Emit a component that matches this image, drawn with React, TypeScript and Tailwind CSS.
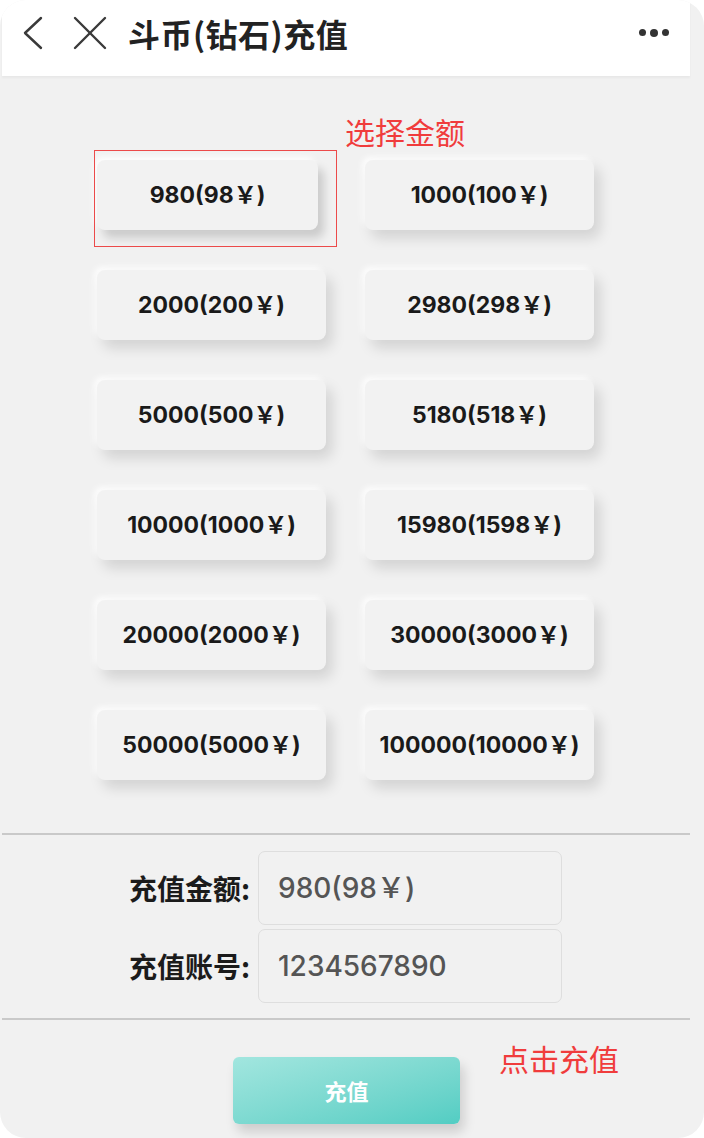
const amounts = [
  "980(98￥)",
  "1000(100￥)",
  "2000(200￥)",
  "2980(298￥)",
  "5000(500￥)",
  "5180(518￥)",
  "10000(1000￥)",
  "15980(1598￥)",
  "20000(2000￥)",
  "30000(3000￥)",
  "50000(5000￥)",
  "100000(10000￥)",
];

const cjk = "font-['Noto_Sans_CJK_SC',sans-serif]";
const num = "font-['Inter','Noto_Sans_CJK_SC',sans-serif]";

const FormRow = ({ label, value }: { label: string; value: string }) => (
  <div className="flex items-center">
    <span
      className={`w-[252px] pr-[2px] text-right text-[28px] font-bold text-[#1b1b1b] ${cjk}`}
    >
      {label}
    </span>
    <div
      className={`ml-[6px] flex h-[74px] w-[304px] items-center rounded-[7px] border border-[#dedede] bg-[#f1f1f1] pl-[19px] text-[28px] font-medium text-[#555] ${num}`}
    >
      {value}
    </div>
  </div>
);

export default function App() {
  return (
    <div className="h-[1138px] w-[704px] bg-white">
      <div className="relative flex h-full flex-col overflow-hidden rounded-[26px] bg-[#f1f1f1]">
        {/* header */}
        <div className="ml-[2px] flex h-[76px] w-[688px] items-center bg-white pb-[11px] shadow-[0_2px_2px_rgba(0,0,0,0.04)]">
          <svg
            className="ml-[20px]"
            width="22"
            height="34"
            viewBox="0 0 22 34"
            fill="none"
            stroke="#3a3a3a"
            strokeWidth="2.4"
            strokeLinecap="round"
            strokeLinejoin="round"
          >
            <polyline points="19,2 3,17 19,32" />
          </svg>
          <svg
            className="ml-[29px]"
            width="34"
            height="34"
            viewBox="0 0 34 34"
            fill="none"
            stroke="#3a3a3a"
            strokeWidth="2.4"
            strokeLinecap="round"
          >
            <line x1="2" y1="2" x2="32" y2="32" />
            <line x1="32" y1="2" x2="2" y2="32" />
          </svg>
          <h1
            className={`ml-[21px] text-[32px] font-bold tracking-[0.5px] text-[#222] ${cjk}`}
          >
            斗币(钻石)充值
          </h1>
          <div className="ml-auto mr-[21px] flex items-center gap-[4px]">
            <span className="h-[7px] w-[7px] rounded-full bg-[#333]" />
            <span className="h-[8px] w-[8px] rounded-full bg-[#333]" />
            <span className="h-[7px] w-[7px] rounded-full bg-[#333]" />
          </div>
        </div>

        {/* amount grid */}
        <div className="relative mt-[84px] grid grid-cols-[229px_229px] gap-x-[39px] gap-y-[40px] pl-[97px]">
          {amounts.map((a, i) => (
            <div
              key={a}
              className={`flex h-[70px] items-center justify-center rounded-[8px] bg-[#f2f2f2] text-[23px] font-bold text-[#1a1a1a] ${num} ${
                i === 0
                  ? "mr-[8px] shadow-[6px_8px_10px_rgba(0,0,0,0.16),-3px_-3px_6px_rgba(255,255,255,0.9)]"
                  : "shadow-[6px_8px_14px_rgba(0,0,0,0.13),-3px_-3px_6px_rgba(255,255,255,0.9)]"
              }`}
            >
              {a}
            </div>
          ))}
          {/* annotation */}
          <span
            className={`absolute left-[345px] top-[-44px] text-[30px] leading-none text-[#f03c3c] ${cjk}`}
          >
            选择金额
          </span>
          <div className="absolute left-[94px] top-[-10px] h-[97px] w-[243px] border-[1.5px] border-[#ec4a4a]" />
        </div>

        <div className="ml-[2px] mt-[53px] h-[2px] w-[688px] bg-[#c9c9c9]" />

        {/* form */}
        <div className="mt-[16px] flex flex-col gap-[4px]">
          <FormRow label="充值金额:" value="980(98￥)" />
          <FormRow label="充值账号:" value="1234567890" />
        </div>

        <div className="ml-[2px] mt-[15px] h-[2px] w-[688px] bg-[#c9c9c9]" />

        {/* submit */}
        <div className="relative mt-[37px] flex">
          <button
            className={`ml-[233px] h-[67px] w-[227px] rounded-[6px] bg-gradient-to-br from-[#a2e6df] to-[#52cdc3] text-[22px] font-bold text-white shadow-[4px_8px_12px_rgba(0,0,0,0.15)] ${cjk}`}
          >
            充值
          </button>
          <span
            className={`absolute left-[499px] top-[-14px] text-[30px] leading-none text-[#f03c3c] ${cjk}`}
          >
            点击充值
          </span>
        </div>
      </div>
    </div>
  );
}
